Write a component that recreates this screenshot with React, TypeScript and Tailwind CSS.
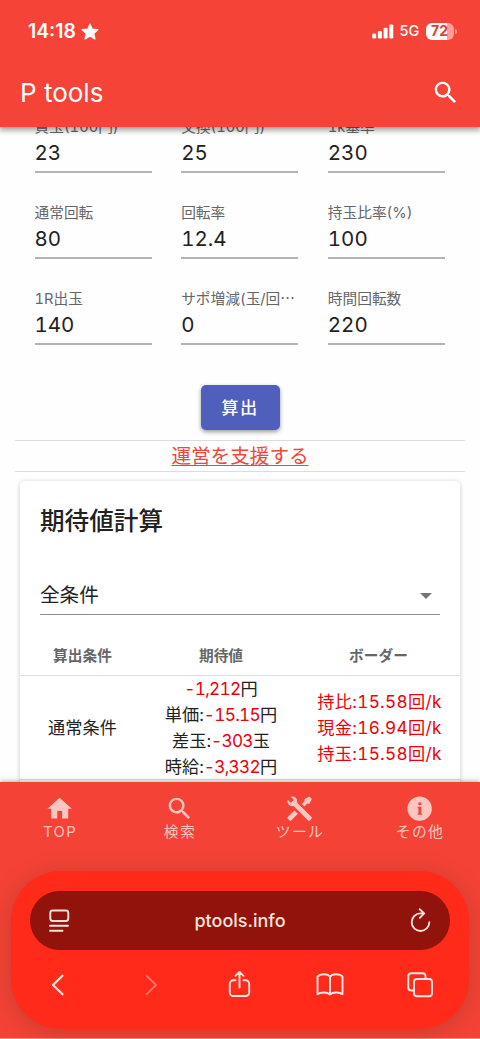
import type { ReactNode } from 'react';

const FIELDS = [
  { label: '貸玉(100円)', value: '23' },
  { label: '交換(100円)', value: '25' },
  { label: '1k基準', value: '230' },
  { label: '通常回転', value: '80' },
  { label: '回転率', value: '12.4' },
  { label: '持玉比率(%)', value: '100' },
  { label: '1R出玉', value: '140' },
  { label: 'サポ増減(玉/回⋯', value: '0' },
  { label: '時間回転数', value: '220' },
];

const EXPECTED = [
  { label: '', value: '-1,212', unit: '円' },
  { label: '単価:', value: '-15.15', unit: '円' },
  { label: '差玉:', value: '-303', unit: '玉' },
  { label: '時給:', value: '-3,332', unit: '円' },
];

const BORDERS = ['持比:15.58回/k', '現金:16.94回/k', '持玉:15.58回/k'];

const MAGNIFY =
  'M9.5,3A6.5,6.5 0 0,1 16,9.5C16,11.11 15.41,12.59 14.44,13.73L14.71,14H15.5L20.5,19L19,20.5L14,15.5V14.71L13.73,14.44C12.59,15.41 11.11,16 9.5,16A6.5,6.5 0 0,1 3,9.5A6.5,6.5 0 0,1 9.5,3M9.5,5C7,5 5,7 5,9.5C5,12 7,14 9.5,14C12,14 14,12 14,9.5C14,7 12,5 9.5,5Z';

const NAV = [
  { label: 'TOP', path: 'M10,20V14H14V20H19V12H22L12,3L2,12H5V20H10Z' },
  { label: '検索', path: MAGNIFY },
  {
    label: 'ツール',
    path: 'M21.71 20.29L20.29 21.71A1 1 0 0 1 18.88 21.71L7 9.85A3.81 3.81 0 0 1 6 10A4 4 0 0 1 2.22 4.7L4.76 7.24L5.29 6.71L6.71 5.29L7.24 4.76L4.7 2.22A4 4 0 0 1 10 6A3.81 3.81 0 0 1 9.85 7L21.71 18.88A1 1 0 0 1 21.71 20.29M2.29 18.88A1 1 0 0 0 2.29 20.29L3.71 21.71A1 1 0 0 0 5.12 21.71L10.59 16.25L7.76 13.42M20 2L16 4V6L13.83 8.17L15.83 10.17L18 8H20L22 4Z',
  },
  {
    label: 'その他',
    path: 'M12 2A10 10 0 1 0 12 22A10 10 0 1 0 12 2ZM10.9 6.9H13.3V9.1H10.9ZM10.3 10.5H13.3V15.9H14V17.1H10.3V15.9H11V11.7H10.3Z',
  },
];

function Icon({ path }: { path: string }) {
  return (
    <svg viewBox="0 0 24 24" fill="currentColor" fillRule="evenodd" className="size-[29.3px] shrink-0">
      <path d={path} />
    </svg>
  );
}

function LineIcon({ children, className = '' }: { children: ReactNode; className?: string }) {
  return (
    <svg
      viewBox="0 0 30 30"
      fill="none"
      stroke="currentColor"
      strokeWidth="1.9"
      strokeLinecap="round"
      strokeLinejoin="round"
      className={`size-[30px] shrink-0 ${className}`}
    >
      {children}
    </svg>
  );
}

function StatusBar() {
  return (
    <div className="flex h-[62px] items-center pl-7 pr-[23.5px]">
      <span className="w-[50px] whitespace-nowrap pt-px text-[19.4px] font-semibold">14:18</span>
      <svg viewBox="0 0 18 17" fill="currentColor" className="ml-[3px] h-[17px] w-[18px]">
        <path
          d="M9 1.2L11.2 6.2L16.8 6.7L12.6 10.4L13.9 15.8L9 13L4.1 15.8L5.4 10.4L1.2 6.7L6.8 6.2Z"
          stroke="currentColor"
          strokeWidth="1.4"
          strokeLinejoin="round"
        />
      </svg>
      <svg viewBox="0 0 22 15" fill="currentColor" className="ml-auto h-[15px] w-[22px]">
        <rect x="0.2" y="9.5" width="4" height="5" rx="1.2" />
        <rect x="5.9" y="7" width="4" height="7.5" rx="1.2" />
        <rect x="11.6" y="3.8" width="4" height="10.7" rx="1.2" />
        <rect x="17.3" y="0.4" width="4" height="14.1" rx="1.2" />
      </svg>
      <span className="ml-1.5 w-[21px] text-[14.5px] font-medium leading-none">5G</span>
      <div className="ml-[5px] flex h-[17px] w-[28px] items-center justify-center rounded-[6px] bg-linear-to-r from-white from-75% to-[#fa9f99] to-75% text-[14px] font-bold leading-none text-[#dd4136]">
        72
      </div>
      <div className="ml-px h-[5px] w-[2px] rounded-r-full bg-[#fa9f99]" />
    </div>
  );
}

function Header() {
  return (
    <header className="relative z-10 h-[127px] shrink-0 bg-[#f54337] text-white shadow-[0_2px_6px_1px_rgba(0,0,0,0.4)]">
      <StatusBar />
      <div className="flex h-[61px] items-center justify-between pl-5 pr-5">
        <h1 className="text-[26px] font-normal">P tools</h1>
        <Icon path={MAGNIFY} />
      </div>
    </header>
  );
}

function ResultCard() {
  return (
    <section className="mx-5 mt-[9px] h-[340px] shrink-0 rounded-[5px] bg-white shadow-[0_1px_5px_rgba(0,0,0,0.22)]">
      <h2 className="px-5 pt-[24px] text-[24.6px] font-medium leading-8">期待値計算</h2>
      <div className="mx-5 mt-[36px] flex h-[42px] items-center justify-between border-b-[1.5px] border-[#8c8c8c] pt-1">
        <span className="text-[19.6px]">全条件</span>
        <svg viewBox="0 0 12 6" className="mr-2 h-[6px] w-[12px] fill-[#757575]">
          <path d="M0 0H12L6 6Z" />
        </svg>
      </div>
      <div className="mt-[20px] grid h-[41px] grid-cols-[125px_152px_163px] items-center border-b border-[#dedede] pt-0.5 text-center text-[14.7px] font-bold text-[#666]">
        <span>算出条件</span>
        <span>期待値</span>
        <span>ボーダー</span>
      </div>
      <div className="grid h-[104px] grid-cols-[125px_152px_163px] items-center border-b border-[#dedede] text-center text-[17.2px] leading-[26px] tabular-nums">
        <span>通常条件</span>
        <div>
          {EXPECTED.map((row) => (
            <p key={row.value}>
              {row.label}
              <span className="tracking-[-0.7px] text-[#ee0008]">{row.value}</span>
              {row.unit}
            </p>
          ))}
        </div>
        <div className="pl-0.5 tracking-[0.3px] text-[#ee0008]">
          {BORDERS.map((text) => (
            <p key={text}>{text}</p>
          ))}
        </div>
      </div>
    </section>
  );
}

function BrowserBar() {
  return (
    <div className="mx-[11px] mt-[23px] h-[158px] shrink-0 rounded-[50px] bg-[#ff2a1a] px-[19px] pt-[20px] shadow-[0_3px_22px_rgba(90,40,30,0.28)]">
      <div className="flex h-[59px] items-center justify-between rounded-full bg-[#92130b] px-[14px] text-[#ffe3dc]">
        <LineIcon>
          <rect x="6.3" y="4.5" width="18" height="10.5" rx="2.4" />
          <path d="M6 19.8H24M6 24.8H18.5" />
        </LineIcon>
        <span className="text-[18px] font-medium">ptools.info</span>
        <LineIcon>
          <path d="M17 7.4H14.5A8.8 8.8 0 1 0 23.3 16.2M13.7 3.2L18.2 7.4L13.8 11.8" />
        </LineIcon>
      </div>
      <div className="mt-[20px] flex items-center justify-between pl-[13px] pr-[15px] text-[#ffe7e2]">
        <LineIcon>
          <path d="M19.5 5.7L10 15L19.5 24.3" strokeWidth="2.3" />
        </LineIcon>
        <LineIcon className="text-[#ff7267]">
          <path d="M12.5 5.7L22 15L12.5 24.3" />
        </LineIcon>
        <LineIcon>
          <path d="M11.5 10.3H9.3A3.5 3.5 0 0 0 5.8 13.8V22.5A3.5 3.5 0 0 0 9.3 26H21.7A3.5 3.5 0 0 0 25.2 22.5V13.8A3.5 3.5 0 0 0 21.7 10.3H19.5M15.5 17.5V2M11.5 5.9L15.5 2L19.5 5.9" />
        </LineIcon>
        <LineIcon>
          <path d="M15 6.8C12.8 3.6 5.5 3.4 2.5 6.7V24.2C5.5 22 12.3 21.8 15 24.5C17.7 21.8 24.5 22 27.5 24.2V6.7C24.5 3.4 17.2 3.6 15 6.8V24.5" />
        </LineIcon>
        <LineIcon>
          <path d="M8.8 20.5H6.3A3 3 0 0 1 3.3 17.5V6.3A3 3 0 0 1 6.3 3.3H17.5A3 3 0 0 1 20.5 6.3V8.8" />
          <rect x="9" y="9" width="18" height="17.3" rx="3" />
        </LineIcon>
      </div>
    </div>
  );
}

export default function App() {
  return (
    <div className="flex h-[1039px] w-[480px] flex-col overflow-hidden bg-[#fefefe] font-['Inter','Noto_Sans_CJK_JP',sans-serif] text-[#212121]">
      <Header />

      <main className="flex h-[655px] shrink-0 flex-col overflow-hidden">
        {/* first row of labels is scrolled half under the header */}
        <div className="-mt-[10px] grid shrink-0 grid-cols-3 gap-x-[29.5px] pl-[34.5px] pr-[35px] tabular-nums">
          {FIELDS.map((field) => (
            <div key={field.label} className="h-[86px]">
              <div className="h-5 whitespace-nowrap text-[14.7px] leading-5 text-[#666]">{field.label}</div>
              <div className="h-[36px] border-b-2 border-[#b4b4b4] text-[20.5px] leading-[32px]">
                {field.value}
              </div>
            </div>
          ))}
        </div>

        <button className="mx-auto mt-[10px] h-[45px] w-[79px] shrink-0 rounded-[5px] bg-[#4f5fbb] text-[17.2px] font-medium tracking-[1.5px] text-white shadow-[0_2px_4px_rgba(0,0,0,0.4)]">
          算出
        </button>

        <div className="mx-[15px] mt-[10px] flex h-[32px] shrink-0 items-center justify-center border-y border-[#dcdcdc] pt-0.5">
          <a className="text-[19.6px] leading-none text-[#f0453a] underline underline-offset-2">運営を支援する</a>
        </div>

        <ResultCard />
      </main>

      <footer className="relative z-10 flex h-[257px] shrink-0 flex-col border-b border-[#f58a82] bg-[#f44336] shadow-[0_-1px_4px_rgba(0,0,0,0.3)]">
        <nav className="grid h-[66px] grid-cols-4 pt-[11.5px] text-[#fcc5c0]">
          {NAV.map((item) => (
            <div key={item.label} className="flex flex-col items-center">
              <Icon path={item.path} />
              <span className="text-[14.8px] leading-[18px] tracking-[1.4px]">{item.label}</span>
            </div>
          ))}
        </nav>
        <BrowserBar />
      </footer>
    </div>
  );
}
